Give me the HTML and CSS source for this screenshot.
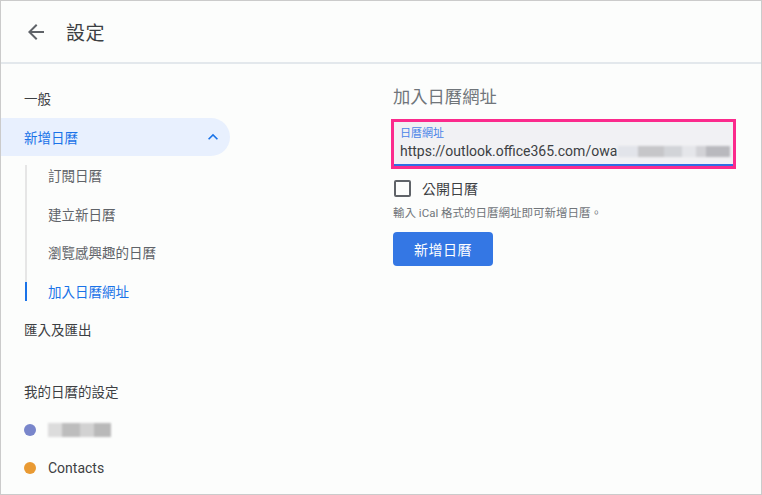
FILE: index.html
```html
<!DOCTYPE html>
<html lang="zh-Hant">
<head>
<meta charset="utf-8">
<title>設定</title>
<link rel="stylesheet" href="styles.css">
</head>
<body>
<div class="frame">
  <header class="topbar">
    <span class="back">
      <svg width="24" height="24" viewBox="0 0 24 24"><path d="M20 11H7.83l5.59-5.59L12 4l-8 8 8 8 1.41-1.41L7.83 13H20v-2z" fill="#5f6368"/></svg>
    </span>
    <h1 class="title">設定</h1>
  </header>
  <div class="main">
    <nav class="sidebar">
      <div class="item">一般</div>
      <div class="item active">新增日曆
        <svg class="chev" width="20" height="20" viewBox="0 0 24 24"><path d="M7.41 15.41L12 10.83l4.59 4.58L18 14l-6-6-6 6z" fill="#1a73e8"/></svg>
      </div>
      <div class="subs">
        <div class="sub">訂閱日曆</div>
        <div class="sub">建立新日曆</div>
        <div class="sub">瀏覽感興趣的日曆</div>
        <div class="sub current">加入日曆網址</div>
      </div>
      <div class="item">匯入及匯出</div>
      <div class="heading">我的日曆的設定</div>
      <div class="cal"><span class="dot blue"></span><span class="blur"><i></i><i></i><i></i><i></i></span></div>
      <div class="cal"><span class="dot orange"></span>Contacts</div>
    </nav>
    <section class="panel">
      <h2 class="ptitle">加入日曆網址</h2>
      <div class="highlight">
        <div class="field">
          <div class="flabel">日曆網址</div>
          <div class="fvalue">https://outlook.office365.com/owa<span class="blurv"><i></i><i></i><i></i><i></i><i></i><i></i></span></div>
        </div>
      </div>
      <label class="check"><span class="box"></span>公開日曆</label>
      <p class="hint">輸入 iCal 格式的日曆網址即可新增日曆。</p>
      <button class="btn">新增日曆</button>
    </section>
  </div>
</div>
</body>
</html>
```
FILE: styles.css
```css
* { box-sizing: border-box; }
html, body { margin: 0; padding: 0; }
body {
  font-family: Roboto, "Noto Sans CJK TC", "Noto Sans", sans-serif;
  color: #3c4043;
  background: #fff;
}
.frame {
  width: 762px;
  height: 495px;
  border: 1px solid #cbcbcb;
  background: #fcfdfc;
  overflow: hidden;
}
.topbar {
  height: 63px;
  display: flex;
  align-items: center;
  border-bottom: 2px solid #e3e8ec;
  padding-left: 23px;
}
.back { display: flex; width: 24px; height: 24px; }
.title {
  margin: 0 0 0 18px;
  font-size: 19px;
  font-weight: 400;
  color: #3c4043;
  letter-spacing: 0.5px;
}
.main { display: flex; }
.sidebar {
  width: 390px;
  padding-top: 15px;
  font-size: 13.5px;
}
.item {
  height: 38.5px;
  display: flex;
  align-items: center;
  padding-left: 23px;
  color: #3c4043;
  width: 229px;
}
.item.active {
  background: #e8f0fe;
  color: #1a73e8;
  border-radius: 0 19px 19px 0;
  justify-content: space-between;
  padding-right: 7px;
}
.chev { display: block; }
.subs {
  position: relative;
  margin-left: 24px;
}
.subs::before {
  content: "";
  position: absolute;
  left: 0;
  top: 9px;
  bottom: 9px;
  width: 2px;
  background: #e6e6e6;
}
.sub {
  height: 38.5px;
  display: flex;
  align-items: center;
  padding-left: 23px;
  color: #5f6368;
  position: relative;
}
.sub.current { color: #1a73e8; }
.sub.current::before {
  content: "";
  position: absolute;
  left: 0;
  top: 10px;
  bottom: 9px;
  width: 2px;
  background: #1a73e8;
  z-index: 1;
}
.heading {
  margin-top: 23.5px;
  height: 38.5px;
  display: flex;
  align-items: center;
  padding-left: 23px;
  color: #3c4043;
}
.cal {
  height: 38.5px;
  display: flex;
  align-items: center;
  padding-left: 23px;
  color: #3c4043;
  font-size: 14px;
}
.cal:first-of-type { }
.dot {
  width: 12px;
  height: 12px;
  border-radius: 50%;
  margin-right: 12px;
}
.dot.blue { background: #7986cb; }
.dot.orange { background: #e99a33; }
.blur { display: flex; filter: blur(0.8px); }
.blur i { display: block; height: 14px; }
.blur i:nth-child(1) { width: 14px; background: #dcdcdc; }
.blur i:nth-child(2) { width: 18px; background: #bdbdbd; }
.blur i:nth-child(3) { width: 14px; background: #d2d2d2; }
.blur i:nth-child(4) { width: 17px; background: #b9b9b9; }
.panel { padding-top: 21px; }
.ptitle {
  margin: 0 0 10px 2px;
  font-size: 17.3px;
  line-height: 24px;
  font-weight: 400;
  color: #70757a;
}
.highlight {
  width: 345px;
  border: 3px solid #fb2a8c;
}
.field {
  background: #f1f1f4;
  height: 44px;
  border-bottom: 2px solid #2f6ee4;
  padding: 5px 0 0 6px;
  overflow: hidden;
}
.flabel {
  font-size: 11px;
  line-height: 14px;
  color: #4a84e8;
}
.fvalue {
  font-size: 14px;
  line-height: 20px;
  color: #3c4043;
  display: flex;
  align-items: center;
  white-space: nowrap;
}
.blurv { display: flex; filter: blur(0.8px); margin-left: 1px; }
.blurv i { display: block; height: 11px; flex: none; }
.blurv i:nth-child(1) { width: 20px; background: #e2e4ea; }
.blurv i:nth-child(2) { width: 26px; background: #c6c6c9; }
.blurv i:nth-child(3) { width: 18px; background: #d2d4d8; }
.blurv i:nth-child(4) { width: 14px; background: #e5e6ea; }
.blurv i:nth-child(5) { width: 10px; background: #d2d2d6; }
.blurv i:nth-child(6) { width: 24px; background: #b9b9be; }
.check {
  display: flex;
  align-items: center;
  height: 24px;
  margin: 7px 0 0 3px;
  font-size: 14px;
  color: #3c4043;
}
.box {
  width: 17px;
  height: 17px;
  border: 2px solid #5f6368;
  border-radius: 2px;
  margin-right: 11px;
}
.hint {
  margin: 4px 0 0 2px;
  font-size: 11.5px;
  line-height: 18px;
  color: #70757a;
}
.btn {
  margin: 10px 0 0 2px;
  width: 100px;
  height: 34px;
  border: none;
  border-radius: 4px;
  background: #3477e4;
  color: #fff;
  font-family: inherit;
  font-size: 14px;
  letter-spacing: 0.5px;
}
```
